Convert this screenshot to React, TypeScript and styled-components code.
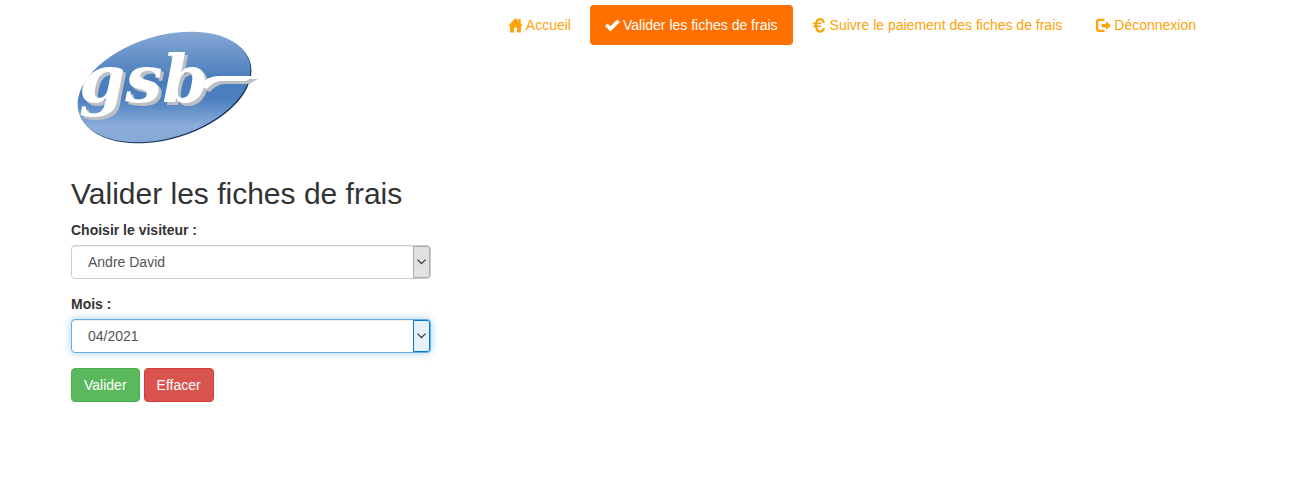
import React from "react";
import styled, { createGlobalStyle, css } from "styled-components";

const GlobalStyle = createGlobalStyle`
  *, *::before, *::after { box-sizing: border-box; }
  body {
    margin: 0;
    padding-right: 22px;
    background: #fff;
    color: #333;
    font: 14px/20px "Helvetica Neue", Helvetica, "Liberation Sans", Arial, sans-serif;
  }
`;

const Container = styled.div`
  max-width: 1170px;
  margin: 0 auto;
  padding: 5px 15px 20px;
`;

const Header = styled.header`
  display: flex;
  justify-content: space-between;
  align-items: flex-start;
  gap: 20px;
`;

const LogoLink = styled.a`
  display: block;
  padding-top: 20px;
`;

const LogoSvg = styled.svg`
  display: block;
  width: 192px;
  height: 132px;
`;

const Lettering = styled.g`
  fill: #fff;
  filter: drop-shadow(3px 3px 0 #bcbfc4);
`;

const LogoText = styled.text`
  font-family: "DejaVu Serif", serif;
  font-size: 66px;
  font-weight: bold;
  font-style: italic;
`;

const NavList = styled.ul`
  display: flex;
  flex-wrap: wrap;
  justify-content: flex-end;
  gap: 4px;
  margin: 0;
  padding: 0;
  list-style: none;
`;

const NavLink = styled.a<{ $active?: boolean }>`
  display: flex;
  align-items: center;
  gap: 3px;
  padding: 10px 15px;
  border-radius: 4px;
  color: #fca30a;
  text-decoration: none;
  ${({ $active }) =>
    $active &&
    css`
      background: #ff7000;
      color: #fff;
    `}
`;

const Glyph = styled.svg`
  flex: none;
  width: 15px;
  height: 15px;
  fill: currentColor;
`;

const Title = styled.h2`
  margin: 20px 0 10px;
  font-size: 30px;
  line-height: 33px;
  font-weight: normal;
`;

const Form = styled.form`
  max-width: 360px;
`;

const Field = styled.div`
  margin-bottom: 15px;
`;

const Label = styled.label`
  display: block;
  margin-bottom: 5px;
  font-weight: bold;
`;

const SelectBox = styled.div`
  position: relative;
`;

const Select = styled.select<{ $focused?: boolean }>`
  display: block;
  width: 100%;
  height: 34px;
  padding: 6px 16px;
  appearance: none;
  border: 1px solid ${({ $focused }) => ($focused ? "#66afe9" : "#ccc")};
  border-radius: 4px;
  outline: 0;
  background: #fff;
  color: #555;
  font: inherit;
  box-shadow: inset 0 1px 1px rgba(0, 0, 0, 0.075)
    ${({ $focused }) => $focused && ", 0 0 8px rgba(102, 175, 233, 0.6)"};
`;

const Arrow = styled.span<{ $focused?: boolean }>`
  position: absolute;
  top: 1px;
  right: 1px;
  bottom: 1px;
  display: flex;
  align-items: center;
  justify-content: center;
  width: 17px;
  border: 1px solid ${({ $focused }) => ($focused ? "#0078d7" : "#adadad")};
  border-radius: 0 3px 3px 0;
  background: ${({ $focused }) => ($focused ? "#e5f1fb" : "#e1e1e1")};
  pointer-events: none;
`;

const Actions = styled.div`
  display: flex;
  gap: 4px;
`;

const Button = styled.button<{ $kind: "success" | "danger" }>`
  padding: 6px 12px;
  border: 1px solid ${({ $kind }) => ($kind === "success" ? "#4cae4c" : "#d43f3a")};
  border-radius: 4px;
  background: ${({ $kind }) => ($kind === "success" ? "#5cb85c" : "#d9534f")};
  color: #fff;
  font: inherit;
  cursor: pointer;
`;

const Logo = () => (
  <LogoSvg viewBox="0 0 192 132" role="img" aria-label="GSB">
    <defs>
      <linearGradient id="oval" gradientUnits="userSpaceOnUse" x1="0" y1="8" x2="0" y2="118">
        <stop offset="0" stopColor="#84a6d4" />
        <stop offset="0.42" stopColor="#4a7dbc" />
        <stop offset="0.6" stopColor="#4c7fbf" />
        <stop offset="0.85" stopColor="#8cadd9" />
        <stop offset="1" stopColor="#86a8d6" />
      </linearGradient>
      <clipPath id="oval-clip">
        <ellipse cx="93" cy="62" rx="89" ry="51" transform="rotate(-17 93 62)" />
      </clipPath>
    </defs>
    <ellipse cx="94" cy="63" rx="89" ry="51" transform="rotate(-17 94 63)" fill="#14305c" />
    <rect width="192" height="132" fill="url(#oval)" clipPath="url(#oval-clip)" />
    <Lettering>
      <LogoText x="8" y="77">gsb</LogoText>
      <path d="M128 60Q137 51 148 51H184L175 56H150Q143 56 136 64Z" />
    </Lettering>
  </LogoSvg>
);

const HomeGlyph = () => (
  <Glyph viewBox="0 0 14 14" aria-hidden="true">
    <path d="M7 0 0 7.5h1.9V13.6H5.6V9.2h2.8v4.4H12.1V7.5H14L11.9 5.2V1H9.7V2.9Z" />
  </Glyph>
);

const CheckGlyph = () => (
  <Glyph viewBox="0 0 14 14" aria-hidden="true">
    <path d="M0 7.5 2.4 5.1 5.1 7.8 11.5 1.4 13.9 3.8 5.1 12.6Z" />
  </Glyph>
);

const EuroGlyph = () => (
  <Glyph viewBox="0 0 14 14" aria-hidden="true">
    <path d="M12 4.7H9.9C9.7 3 9 2.1 7.7 2.1 6.4 2.1 5.6 2.8 5.2 4.4H9L8.5 5.7H5V7H8.7L8.2 8.4H5.1C5.4 10.4 6.3 11.6 7.7 11.6 9 11.6 9.8 10.8 10 9.3H12C11.7 12.1 10.2 13.7 7.6 13.7 4.9 13.7 3.2 11.7 2.8 8.4H.6L1.1 7H2.6V5.7H.6L1.1 4.4H2.8C3.3 1.6 5 0 7.5 0 10.2 0 11.8 1.8 12 4.7Z" />
  </Glyph>
);

const LogoutGlyph = () => (
  <Glyph viewBox="0 0 14 14" aria-hidden="true">
    <path d="M8 .8H2.8C1 .8 0 1.8 0 3.5V10.3C0 12 1 13 2.8 13H8V11H3C2.4 11 2.1 10.7 2.1 10.1V3.8C2.1 3.2 2.4 2.9 3 2.9H8ZM9.3 3V5.5H5.2V8.6H9.3V11.1L14 7Z" />
  </Glyph>
);

const links = [
  { label: "Accueil", icon: <HomeGlyph /> },
  { label: "Valider les fiches de frais", icon: <CheckGlyph />, active: true },
  { label: "Suivre le paiement des fiches de frais", icon: <EuroGlyph /> },
  { label: "Déconnexion", icon: <LogoutGlyph /> },
];

interface SelectFieldProps {
  id: string;
  label: string;
  options: string[];
  focused?: boolean;
}

const SelectField = ({ id, label, options, focused }: SelectFieldProps) => (
  <Field>
    <Label htmlFor={id}>{label}</Label>
    <SelectBox>
      <Select id={id} name={id} $focused={focused}>
        {options.map((option) => (
          <option key={option}>{option}</option>
        ))}
      </Select>
      <Arrow $focused={focused}>
        <svg width="9" height="6" viewBox="0 0 9 6" fill="none" stroke="#333" strokeWidth="1.2" aria-hidden="true">
          <path d="M.5.7 4.5 4.7 8.5.7" />
        </svg>
      </Arrow>
    </SelectBox>
  </Field>
);

export default function App() {
  return (
    <>
      <GlobalStyle />
      <Container>
        <Header>
          <LogoLink href="#">
            <Logo />
          </LogoLink>
          <nav>
            <NavList>
              {links.map(({ label, icon, active }) => (
                <li key={label}>
                  <NavLink href="#" $active={active} aria-current={active ? "page" : undefined}>
                    {icon}
                    {label}
                  </NavLink>
                </li>
              ))}
            </NavList>
          </nav>
        </Header>
        <main>
          <Title>Valider les fiches de frais</Title>
          <Form>
            <SelectField id="visiteur" label="Choisir le visiteur :" options={["Andre David"]} />
            <SelectField id="mois" label="Mois :" options={["04/2021"]} focused />
            <Actions>
              <Button type="submit" $kind="success">Valider</Button>
              <Button type="reset" $kind="danger">Effacer</Button>
            </Actions>
          </Form>
        </main>
      </Container>
    </>
  );
}
